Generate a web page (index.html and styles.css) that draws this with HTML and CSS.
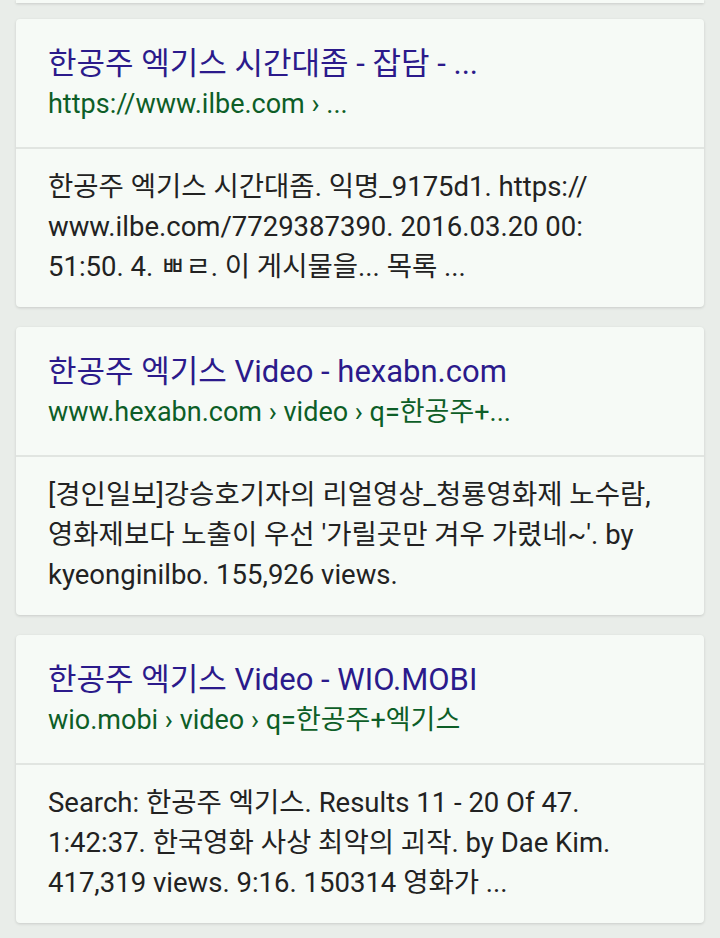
FILE: index.html
```html
<!DOCTYPE html>
<html lang="ko">
<head>
  <meta charset="UTF-8">
  <title>검색 결과</title>
  <link rel="stylesheet" href="styles.css">
</head>
<body>
  <div class="results">
    <div class="card-end"></div>

    <div class="card">
      <div class="card-head">
        <a class="title" href="#">한공주 엑기스 시간대좀 - 잡담 - ...</a>
        <div class="url">https://www.ilbe.com › ...</div>
      </div>
      <div class="card-body">
        한공주 엑기스 시간대좀. 익명_9175d1. https://<br>
        www.ilbe.com/7729387390. 2016.03.20 00:<br>
        51:50. 4. ㅃㄹ. 이 게시물을... 목록 ...
      </div>
    </div>

    <div class="card">
      <div class="card-head">
        <a class="title" href="#">한공주 엑기스 Video - hexabn.com</a>
        <div class="url">www.hexabn.com › video › q=한공주+...</div>
      </div>
      <div class="card-body">
        [경인일보]강승호기자의 리얼영상_청룡영화제 노수람,<br>
        영화제보다 노출이 우선 '가릴곳만 겨우 가렸네~'. by<br>
        kyeonginilbo. 155,926 views.
      </div>
    </div>

    <div class="card">
      <div class="card-head">
        <a class="title" href="#">한공주 엑기스 Video - WIO.MOBI</a>
        <div class="url">wio.mobi › video › q=한공주+엑기스</div>
      </div>
      <div class="card-body">
        Search: 한공주 엑기스. Results 11 - 20 Of 47.<br>
        1:42:37. 한국영화 사상 최악의 괴작. by Dae Kim.<br>
        417,319 views. 9:16. 150314 영화가 ...
      </div>
    </div>
  </div>
</body>
</html>
```

FILE: styles.css
```css
body {
  margin: 0;
  background: #e9ede9;
  font-family: Roboto, "Noto Sans CJK KR", sans-serif;
  color: #222;
}

.results {
  padding: 0 16px;
}

.card-end {
  height: 3px;
  background: #f6faf6;
  box-shadow: 0 1px 3px rgba(0, 0, 0, 0.15);
  margin-bottom: 16px;
}

.card {
  background: #f6faf6;
  border-radius: 4px;
  box-shadow: 0 1px 3px rgba(0, 0, 0, 0.14);
  margin-bottom: 20px;
}

.card-head {
  height: 128px;
  box-sizing: border-box;
  padding: 25px 32px 0;
}

.title {
  display: block;
  color: #2b1a8b;
  text-decoration: none;
  font-size: 31px;
  line-height: 40px;
  white-space: nowrap;
}

.url {
  color: #0d5e27;
  font-size: 27px;
  line-height: 40px;
  white-space: nowrap;
}

.card-body {
  border-top: 2px solid #e1e5e1;
  height: 160px;
  box-sizing: border-box;
  padding: 18px 32px 0;
  font-size: 27.5px;
  line-height: 40px;
  white-space: nowrap;
}
```
